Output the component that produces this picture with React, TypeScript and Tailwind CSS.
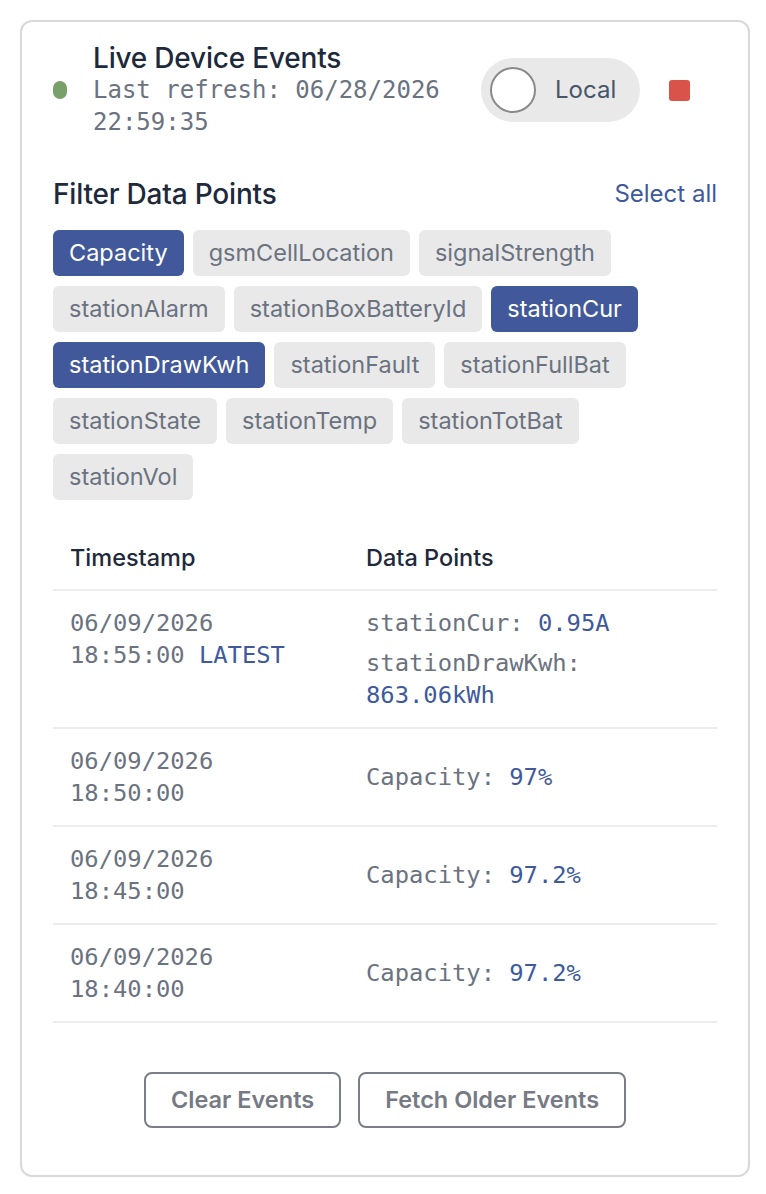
import { useState } from "react"

const points = [
  "Capacity",
  "gsmCellLocation",
  "signalStrength",
  "stationAlarm",
  "stationBoxBatteryId",
  "stationCur",
  "stationDrawKwh",
  "stationFault",
  "stationFullBat",
  "stationState",
  "stationTemp",
  "stationTotBat",
  "stationVol",
]

type EventRow = {
  date: string
  time: string
  latest?: boolean
  values: { key: string; value: string; wrap?: boolean }[]
}

const events: EventRow[] = [
  {
    date: "06/09/2026",
    time: "18:55:00",
    latest: true,
    values: [
      { key: "stationCur", value: "0.95A" },
      { key: "stationDrawKwh", value: "863.06kWh", wrap: true },
    ],
  },
  { date: "06/09/2026", time: "18:50:00", values: [{ key: "Capacity", value: "97%" }] },
  { date: "06/09/2026", time: "18:45:00", values: [{ key: "Capacity", value: "97.2%" }] },
  { date: "06/09/2026", time: "18:40:00", values: [{ key: "Capacity", value: "97.2%" }] },
]

const mono = "font-['DejaVu_Sans_Mono',monospace]"

export default function App() {
  const [selected, setSelected] = useState<string[]>(["Capacity", "stationCur", "stationDrawKwh"])
  const [local, setLocal] = useState(false)

  const toggle = (p: string) =>
    setSelected((s) => (s.includes(p) ? s.filter((x) => x !== p) : [...s, p]))

  return (
    <div className="min-h-screen bg-white py-5 pr-4 pl-5 font-['Inter',sans-serif]">
      <div className="rounded-xl border-2 border-[#d9d9d9] bg-white px-[31px] pt-[20px] pb-[47px]">
        {/* header */}
        <div className="flex items-center">
          <span className="h-[18px] w-[14px] shrink-0 rounded-full bg-[#79a068]" />
          <div className="ml-[26px] min-w-0 flex-1 pr-6">
            <div className="text-[28px] leading-[32px] font-medium tracking-[-0.2px] text-[#1e293b]">
              Live Device Events
            </div>
            <div className={`${mono} text-[24px] leading-[32px] text-[#6b7280]`}>
              Last refresh: 06/28/2026 22:59:35
            </div>
          </div>
          <button
            onClick={() => setLocal(!local)}
            className="flex h-16 w-[159px] shrink-0 items-center rounded-full bg-[#e9e9e9] pl-[9px]"
          >
            <span className="h-[46px] w-[46px] rounded-full border-2 border-[#8a8a8a] bg-white" />
            <span className="ml-[19px] text-[24px] text-[#475569]">Local</span>
          </button>
          <span className="mr-[27px] ml-[29px] h-[21px] w-[21px] shrink-0 rounded-[3px] bg-[#d9534a]" />
        </div>

        {/* filters */}
        <div className="mt-[40px] flex items-center justify-between">
          <div className="text-[28px] leading-[32px] font-medium tracking-[-0.2px] text-[#1e293b]">
            Filter Data Points
          </div>
          <button onClick={() => setSelected(points)} className="text-[24px] leading-[32px] text-[#3e5a9c]">
            Select all
          </button>
        </div>
        <div className="mt-[20px] flex flex-wrap gap-x-[9px] gap-y-[10px]">
          {points.map((p) => {
            const on = selected.includes(p)
            return (
              <button
                key={p}
                onClick={() => toggle(p)}
                className={`h-[46px] rounded-md px-4 text-[23.5px] ${
                  on ? "bg-[#41599a] text-white" : "bg-[#e9e9e9] text-[#6b7280]"
                }`}
              >
                {p}
              </button>
            )
          })}
        </div>

        {/* events table */}
        <table className="mt-[26px] w-full text-left">
          <thead>
            <tr className="border-b-2 border-[#ececec]">
              <th className="h-16 w-[313px] px-[17px] text-[23.5px] font-medium text-[#1e293b]">Timestamp</th>
              <th className="h-16 px-0 text-[23.5px] font-medium text-[#1e293b]">Data Points</th>
            </tr>
          </thead>
          <tbody>
            {events.map((e, i) => (
              <tr key={i} className="border-b-2 border-[#ececec]">
                <td className={`${mono} px-[17px] py-4 align-top text-[23.8px] leading-[32px] text-[#6b7280]`}>
                  <div>{e.date}</div>
                  <div>
                    {e.time}
                    {e.latest && <span className="text-[#3e5a9c]"> LATEST</span>}
                  </div>
                </td>
                <td className={`${mono} py-4 align-middle text-[23.8px] leading-[32px] text-[#6b7280]`}>
                  <div className="flex flex-col gap-2">
                    {e.values.map((v) => (
                      <div key={v.key}>
                        {v.key}:{v.wrap ? <br /> : " "}
                        <span className="text-[#3e5a9c]">{v.value}</span>
                      </div>
                    ))}
                  </div>
                </td>
              </tr>
            ))}
          </tbody>
        </table>

        {/* actions */}
        <div className="mt-[49px] flex justify-center gap-[17px]">
          <button className="h-14 rounded-lg border-2 border-[#7b7e88] px-[25px] text-[23.5px] font-semibold text-[#767a84]">
            Clear Events
          </button>
          <button className="h-14 rounded-lg border-2 border-[#7b7e88] px-[25px] text-[23.5px] font-semibold text-[#767a84]">
            Fetch Older Events
          </button>
        </div>
      </div>
    </div>
  )
}
